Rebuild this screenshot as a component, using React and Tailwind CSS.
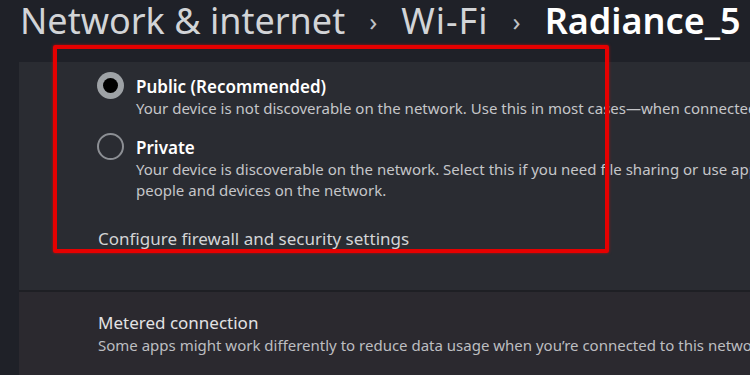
import React from "react";

const font = { fontFamily: '"Noto Sans", "Liberation Sans", sans-serif' };

const Radio = ({ checked }) =>
  checked ? (
    <div className="w-[27px] h-[27px] rounded-full bg-[#9ea2a6] flex items-center justify-center shrink-0">
      <div className="w-[15px] h-[15px] rounded-full bg-black" />
    </div>
  ) : (
    <div className="w-[27px] h-[27px] rounded-full border-2 border-[#8c8f94] shrink-0" />
  );

const Option = ({ checked, title, lines }) => (
  <div className="flex items-start gap-[12px]">
    <div className="-mt-[4px]">
      <Radio checked={checked} />
    </div>
    <div className="flex flex-col">
      <div className="text-[17px] leading-[22px] font-semibold text-white">{title}</div>
      {lines.map((l, i) => (
        <div key={i} className="text-[15px] leading-[21px] text-[#c5c6c9] whitespace-nowrap">
          {l}
        </div>
      ))}
    </div>
  </div>
);

export default function App() {
  return (
    <div
      className="relative w-[750px] h-[375px] overflow-hidden bg-[#1f2128] flex flex-col"
      style={font}
    >
      <div className="h-[62px] flex items-start pl-[20px] gap-[24px] text-[36px] leading-[42px] whitespace-nowrap">
        <span className="text-[#d2d4d7]">Network &amp; internet</span>
        <span className="text-[#c0c2c5] text-[26px] leading-[42px]">›</span>
        <span className="text-[#d2d4d7] tracking-[1px]">Wi-Fi</span>
        <span className="text-[#c0c2c5] text-[26px] leading-[42px]">›</span>
        <span className="text-white font-semibold">Radiance_5</span>
      </div>

      <div className="ml-[19px] flex-1 flex flex-col">
        <div className="h-[230px] bg-[#2a2c32] border-b-2 border-[#1e1f24] pl-[78px] pt-[14px] flex flex-col">
          <div className="flex flex-col gap-[18px]">
            <Option
              checked
              title="Public (Recommended)"
              lines={[
                "Your device is not discoverable on the network. Use this in most cases—when connected to a network at home, work, or in a public place.",
              ]}
            />
            <Option
              title="Private"
              lines={[
                "Your device is discoverable on the network. Select this if you need file sharing or use apps that communicate over this network. You should know and trust the",
                "people and devices on the network.",
              ]}
            />
          </div>
          <div className="mt-[26px] pl-[1px] text-[17px] leading-[24px] text-[#d3d4d6]">
            Configure firewall and security settings
          </div>
        </div>
        <div className="flex-1 bg-[#2b292f] pl-[79px] pt-[19px]">
          <div className="text-[17px] leading-[24px] text-[#e2e2e4]">Metered connection</div>
          <div className="text-[15px] leading-[21px] text-[#bdbec1] whitespace-nowrap">
            Some apps might work differently to reduce data usage when you’re connected to this network
          </div>
        </div>
      </div>

      <div className="absolute left-[53px] top-[45px] w-[556px] h-[208px] border-[4px] border-[#e60000] rounded-[2px] shadow-[0_0_3px_rgba(255,0,0,0.6)] pointer-events-none" />
    </div>
  );
}
